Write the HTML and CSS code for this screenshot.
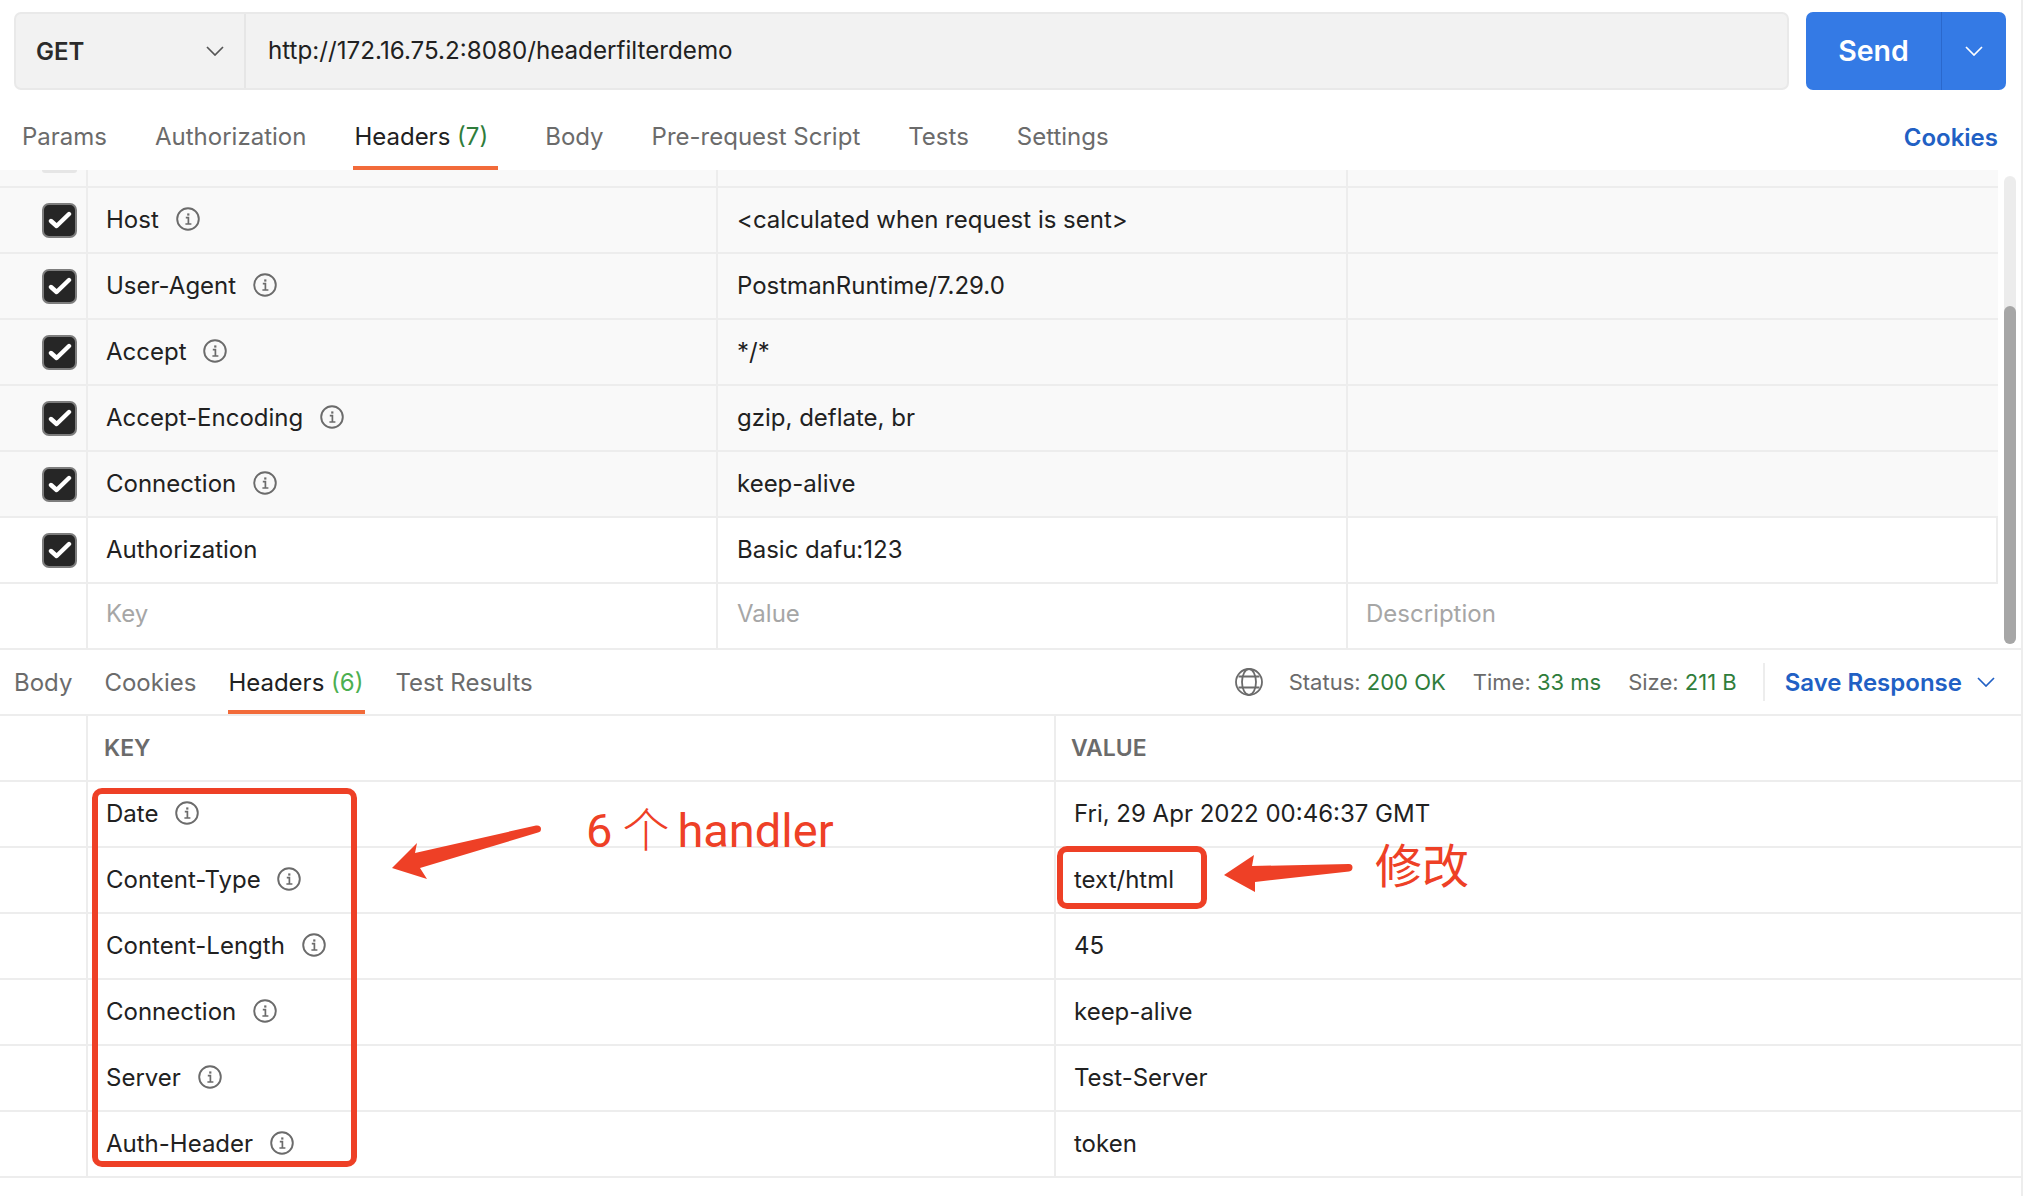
FILE: index.html
```html
<!DOCTYPE html>
<html lang="zh-CN">
<head>
  <meta charset="UTF-8" />
  <title>Postman headers</title>
  <link rel="stylesheet" href="styles.css">
</head>
<body>
  <svg class="sprites" width="0" height="0">
    <symbol id="info" viewBox="0 0 24 24">
      <circle cx="12" cy="12" r="10.8" fill="none" stroke="#6b6b6b" stroke-width="1.9"/>
      <path d="M9.800 10.600h2.600v6.200M9.400 17h6" fill="none" stroke="#6b6b6b" stroke-width="1.700"/>
      <rect x="11.200" y="6.400" width="2.200" height="2.200" fill="#6b6b6b"/>
    </symbol>
    <symbol id="chev" viewBox="0 0 18 10">
      <path d="M1 1l8 8 8-8" fill="none" stroke="currentColor" stroke-width="1.7"/>
    </symbol>
    <symbol id="check" viewBox="0 0 24 18">
      <path d="M3 10l5.600 5L21 3" fill="none" stroke="#fff" stroke-width="4.400" stroke-linecap="round" stroke-linejoin="round"/>
    </symbol>
  </svg>

  <div id="app">
    <div class="url-bar">
      <div class="url-box">
        <div class="method">GET <svg class="chev"><use href="#chev"/></svg></div>
        <div class="url">http://172.16.75.2:8080/headerfilterdemo</div>
      </div>
      <div class="send">
        <span class="send-label">Send</span>
        <span class="send-more"><svg class="chev"><use href="#chev"/></svg></span>
      </div>
    </div>

    <div class="req-tabs">
      <span class="tab">Params</span>
      <span class="tab">Authorization</span>
      <span class="tab active">Headers <em class="count-dark">(7)</em></span>
      <span class="tab">Body</span>
      <span class="tab">Pre-request Script</span>
      <span class="tab">Tests</span>
      <span class="tab">Settings</span>
      <span class="cookies">Cookies</span>
    </div>

    <div class="req-area">
      <div class="req-table">
        <div class="row clip locked">
          <div class="c-check"><span class="cb-clip"></span></div><div class="c-key"></div><div class="c-val"></div><div class="c-desc"></div>
        </div>
        <div class="row locked">
          <div class="c-check"><span class="cb"><svg><use href="#check"/></svg></span></div>
          <div class="c-key">Host <svg class="info"><use href="#info"/></svg></div>
          <div class="c-val">&lt;calculated when request is sent&gt;</div><div class="c-desc"></div>
        </div>
        <div class="row locked">
          <div class="c-check"><span class="cb"><svg><use href="#check"/></svg></span></div>
          <div class="c-key">User-Agent <svg class="info"><use href="#info"/></svg></div>
          <div class="c-val">PostmanRuntime/7.29.0</div><div class="c-desc"></div>
        </div>
        <div class="row locked">
          <div class="c-check"><span class="cb"><svg><use href="#check"/></svg></span></div>
          <div class="c-key">Accept <svg class="info"><use href="#info"/></svg></div>
          <div class="c-val">*/*</div><div class="c-desc"></div>
        </div>
        <div class="row locked">
          <div class="c-check"><span class="cb"><svg><use href="#check"/></svg></span></div>
          <div class="c-key">Accept-Encoding <svg class="info"><use href="#info"/></svg></div>
          <div class="c-val">gzip, deflate, br</div><div class="c-desc"></div>
        </div>
        <div class="row locked">
          <div class="c-check"><span class="cb"><svg><use href="#check"/></svg></span></div>
          <div class="c-key">Connection <svg class="info"><use href="#info"/></svg></div>
          <div class="c-val">keep-alive</div><div class="c-desc"></div>
        </div>
        <div class="row edit">
          <div class="c-check"><span class="cb"><svg><use href="#check"/></svg></span></div>
          <div class="c-key">Authorization</div>
          <div class="c-val">Basic dafu:123</div><div class="c-desc"></div>
        </div>
        <div class="row placeholder">
          <div class="c-check"></div>
          <div class="c-key">Key</div>
          <div class="c-val">Value</div><div class="c-desc">Description</div>
        </div>
      </div>
      <div class="scrollbar"><div class="thumb"></div></div>
    </div>

    <div class="res-tabs">
      <span class="tab">Body</span>
      <span class="tab">Cookies</span>
      <span class="tab active">Headers <em class="count-light">(6)</em></span>
      <span class="tab">Test Results</span>
      <div class="res-meta">
        <svg class="globe" viewBox="0 0 28 28" fill="none" stroke="#6b6b6b" stroke-width="1.8">
          <circle cx="14" cy="14" r="13"/>
          <ellipse cx="14" cy="14" rx="7" ry="13"/>
          <path d="M3.500 8.500h21M3.500 19.500h21"/>
        </svg>
        <span class="stat stat-status">Status: <b>200 OK</b></span>
        <span class="stat stat-time">Time: <b>33 ms</b></span>
        <span class="stat stat-size">Size: <b>211 B</b></span>
        <span class="save">Save Response <svg class="chev"><use href="#chev"/></svg></span>
      </div>
    </div>

    <div class="res-table">
      <div class="row head"><div class="c-check"></div><div class="c-key">KEY</div><div class="c-val">VALUE</div></div>
      <div class="row"><div class="c-check"></div><div class="c-key">Date <svg class="info"><use href="#info"/></svg></div><div class="c-val">Fri, 29 Apr 2022 00:46:37 GMT</div></div>
      <div class="row"><div class="c-check"></div><div class="c-key">Content-Type <svg class="info"><use href="#info"/></svg></div><div class="c-val">text/html</div></div>
      <div class="row"><div class="c-check"></div><div class="c-key">Content-Length <svg class="info"><use href="#info"/></svg></div><div class="c-val">45</div></div>
      <div class="row"><div class="c-check"></div><div class="c-key">Connection <svg class="info"><use href="#info"/></svg></div><div class="c-val">keep-alive</div></div>
      <div class="row"><div class="c-check"></div><div class="c-key">Server <svg class="info"><use href="#info"/></svg></div><div class="c-val">Test-Server</div></div>
      <div class="row"><div class="c-check"></div><div class="c-key">Auth-Header <svg class="info"><use href="#info"/></svg></div><div class="c-val">token</div></div>
    </div>
  </div>

  <!-- red markup drawn over the screenshot -->
  <div class="mark mark-keys"></div>
  <div class="mark mark-type"></div>
  <svg class="arrows" viewBox="0 0 2038 1196">
    <path d="M392 868L417 843 415 853 536 825.500Q541 825 541 829 541 832 538 832.500L420 868 427 879Z"/>
    <path d="M1224 875L1254 855 1252 866 1349 864Q1352.500 864 1352.500 867.500 1352.500 871 1349 871.500L1255 882 1255 892Z"/>
  </svg>
  <div class="note note-handler">6<span class="zh">个</span>handler</div>
  <div class="note note-edit">修改</div>
</body>
</html>
```

FILE: styles.css
```css
:root {
  --line: #ededed;
  --text: #212121;
  --muted: #6b6b6b;
  --orange: #f26b3a;
  --red: #ee4026;
  --blue: #2160c4;
  --green: #2f7d3b;
  --row: 66px;
}
* { box-sizing: border-box; }
html, body { margin: 0; height: 100%; background: #fff; }
body {
  position: relative;
  overflow: hidden;
  font-family: Inter, "Noto Sans CJK SC", sans-serif;
  font-size: 24px;
  color: var(--text);
}
.sprites { position: absolute; }
em { font-style: normal; }
.chev { width: 18px; height: 10px; }

#app { width: 2023px; height: 1196px; border-right: 2px solid var(--line); }

/* url bar */
.url-bar { display: flex; height: 90px; padding: 12px 15px 0 14px; gap: 17px; }
.url-box {
  flex: 1;
  display: flex;
  background: #f2f2f2;
  border: 2px solid #e9e9e9;
  border-radius: 7px;
}
.method {
  width: 230px;
  display: flex;
  align-items: center;
  justify-content: space-between;
  padding: 0 20px 0 20px;
  border-right: 2px solid #e6e6e6;
  font-weight: 600;
  color: #2b2b2b;
}
.method .chev { color: #555; }
.url { flex: 1; display: flex; align-items: center; padding: 0 0 2px 22px; font-size: 24.200px; }
.send {
  width: 200px;
  display: flex;
  background: #347ae5;
  border-radius: 7px;
  color: #fff;
  font-weight: 600;
  font-size: 28.500px;
}
.send-label { flex: 1; display: flex; align-items: center; justify-content: center; padding-bottom: 2px; }
.send-more {
  width: 65px;
  display: flex;
  align-items: center;
  justify-content: center;
  border-left: 1.500px solid #2a68cc;
}

/* tabs */
.tab { color: var(--muted); }
.tab.active { color: var(--text); position: relative; }
.tab.active::after {
  content: "";
  position: absolute;
  left: -1px;
  right: -10px;
  bottom: 0;
  height: 4px;
  background: var(--orange);
}
.req-tabs {
  display: flex;
  height: 80px;
  padding: 0 23px 0 22px;
  gap: 48px;
}
.req-tabs .tab { display: flex; align-items: center; white-space: pre; padding-top: 12px; }
.req-tabs .tab.active { margin-right: 9px; }
.count-dark { color: var(--green); }
.count-light { color: #4caf50; }
.cookies { margin-left: auto; align-self: center; padding-top: 14px; color: var(--blue); font-weight: 600; }

/* request table */
.req-area { display: flex; height: 480px; border-bottom: 2px solid var(--line); }
.req-table { width: 1998px; }
.row { display: flex; height: var(--row); border-bottom: 2px solid var(--line); }
.row > div { display: flex; align-items: center; }
.c-check { width: 88px; justify-content: flex-end; border-right: 2px solid var(--line); padding-right: 9px; }
.c-key { padding: 0 0 2px 18px; white-space: pre; }
.c-val, .c-desc { padding-bottom: 2px; }
.info { width: 24px; height: 24px; margin-left: 10px; flex: none; }
.req-table .c-key { width: 630px; border-right: 2px solid var(--line); }
.req-table .c-val { width: 630px; padding-left: 19px; border-right: 2px solid var(--line); }
.req-table .c-desc { flex: 1; padding-left: 18px; }
.row.locked { background: #f9f9f9; }
.row.clip { height: 18px; overflow: hidden; }
.row.clip .c-check { align-items: flex-start; }
.cb-clip { width: 35px; height: 3px; background: #e6e6e6; border-radius: 0 0 6px 6px; }
.cb {
  width: 35px;
  height: 35px;
  display: flex;
  align-items: center;
  justify-content: center;
  background: #262626;
  border: 2px solid #7d7d7d;
  border-radius: 7px;
}
.cb svg { width: 24px; height: 18px; }
.row.edit { border-right: 2px solid var(--line); }
.row.placeholder { color: #a6a6a6; border-bottom: 0; height: 64px; }
.row.placeholder > div { padding-bottom: 5px; }
.row.placeholder .c-check { padding-bottom: 0; }
.scrollbar { width: 12px; margin: 6px 0 0 6px; background: #ececec; border-radius: 6px; height: 468px; }
.thumb { margin-top: 130px; height: 338px; background: #a6a6a6; border-radius: 6px; }

/* response */
.res-tabs {
  display: flex;
  align-items: stretch;
  height: 66px;
  padding-left: 14px;
  gap: 32px;
  border-bottom: 2px solid var(--line);
}
.res-tabs .tab { display: flex; align-items: center; white-space: pre; }
.res-tabs .tab.active::after { left: 0; right: -2px; }
.res-meta { margin-left: auto; display: flex; align-items: center; color: var(--muted); font-size: 22px; }
.globe { width: 28px; height: 28px; margin-right: 26px; }
.stat { white-space: pre; margin-right: 25px; }
.stat-status { margin-right: 27px; }
.stat-time { margin-right: 27px; }
.stat-size { margin-right: 26px; }
.stat b { font-weight: 400; color: var(--green); }
.save {
  display: flex;
  align-items: center;
  gap: 9px;
  height: 38px;
  padding: 0 26px 0 20px;
  border-left: 2px solid var(--line);
  color: var(--blue);
  font-weight: 600;
  font-size: 24px;
  white-space: pre;
}
.res-table .c-key { width: 968px; border-right: 2px solid var(--line); }
.res-table .c-val { flex: 1; padding-left: 18px; }
.row.head { font-weight: 600; color: var(--muted); font-size: 23px; }
.row.head .c-key { padding: 0 0 0 16px; }
.row.head .c-val { padding: 0 0 0 15px; }

/* red markup */
.mark { position: absolute; border: 6px solid var(--red); border-radius: 10px; }
.mark-keys { left: 92px; top: 788px; width: 265px; height: 379px; }
.mark-type { left: 1057px; top: 846px; width: 150px; height: 63px; }
.arrows { position: absolute; left: 0; top: 0; width: 2038px; height: 1196px; fill: var(--red); }
.note { position: absolute; color: var(--red); white-space: pre; }
.note-handler { left: 586px; top: 797px; font-family: Roboto, sans-serif; font-size: 47px; line-height: 60px; }
.note-handler .zh { font-family: "Noto Sans CJK SC", sans-serif; font-weight: 300; margin: 0 8px 0 10px; }
.note-edit { left: 1375px; top: 831px; font-family: "Noto Sans CJK SC", sans-serif; font-weight: 400; font-size: 47px; line-height: 64px; }
```
